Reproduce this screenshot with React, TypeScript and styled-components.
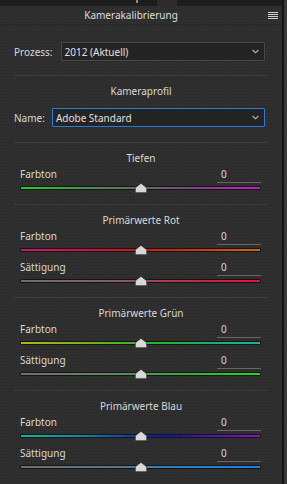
import React from 'react'
import styled, { createGlobalStyle } from 'styled-components'

const GlobalStyle = createGlobalStyle`
  html, body { margin: 0; padding: 0; background: #2f2f2f; }
  body { font-family: "Noto Sans", "Open Sans", sans-serif; }
`

interface ISliderDef {
    label: string,
    value: number,
    gradient: string,
}

interface IGroupDef {
    title: string,
    sliders: ISliderDef[],
}

const GROUPS: IGroupDef[] = [
    {
        title: 'Tiefen',
        sliders: [
            { label: 'Farbton', value: 0, gradient: 'linear-gradient(90deg, #1fd21f 0%, #4f8a4f 30%, #6a6a6a 50%, #7a4a7a 68%, #d014d0 100%)' },
        ],
    },
    {
        title: 'Primärwerte Rot',
        sliders: [
            { label: 'Farbton', value: 0, gradient: 'linear-gradient(90deg, #c8147a 0%, #c81440 30%, #c81818 50%, #c83a10 75%, #c86a10 100%)' },
            { label: 'Sättigung', value: 0, gradient: 'linear-gradient(90deg, #707070 0%, #8a5a62 40%, #c02848 75%, #e8103c 100%)' },
        ],
    },
    {
        title: 'Primärwerte Grün',
        sliders: [
            { label: 'Farbton', value: 0, gradient: 'linear-gradient(90deg, #b4b414 0%, #70b418 30%, #28b428 55%, #14b470 80%, #14b4a8 100%)' },
            { label: 'Sättigung', value: 0, gradient: 'linear-gradient(90deg, #707070 0%, #5e885e 40%, #30b830 75%, #1ed81e 100%)' },
        ],
    },
    {
        title: 'Primärwerte Blau',
        sliders: [
            { label: 'Farbton', value: 0, gradient: 'linear-gradient(90deg, #14b4a0 0%, #1488a0 25%, #1440a8 45%, #1414a8 60%, #5014b4 80%, #8c14c8 100%)' },
            { label: 'Sättigung', value: 0, gradient: 'linear-gradient(90deg, #707070 0%, #5a7890 40%, #2080d0 75%, #1880e8 100%)' },
        ],
    },
]

const Screen = styled.div`
    width: 287px;
    height: 484px;
    overflow: hidden;
    display: flex;
    background: #2f2f2f;
`

const Panel = styled.div`
    width: 282px;
    display: flex;
    flex-direction: column;
    background-color: #2f2f2f;
    background-image: radial-gradient(rgba(0,0,0,0.16) 0.6px, transparent 0.9px);
    background-size: 3px 3px;
    color: #d8d8d8;
    font-size: 10px;
`

const EdgeLine = styled.div`
    width: 2px;
    background: #141414;
`

const EdgeRest = styled.div`
    flex: 1;
    background: #3a3a3a;
`

const TopStrip = styled.div`
    height: 6px;
    background: #1d1d1d;
    display: flex;
    align-items: flex-start;
`

const TopMark = styled.div`
    width: 2px;
    height: 3px;
    margin-left: 136px;
    background: #8a8a8a;
`

const TopTab = styled.div`
    width: 20px;
    height: 6px;
    margin-left: 19px;
    background: #2c2c2c;
`

const Header = styled.div`
    height: 18px;
    display: flex;
    align-items: center;
    border-bottom: 1px solid #282828;
    color: #dedede;
`

const HeaderTitle = styled.div`
    flex: 1;
    text-align: center;
    line-height: 18px;
`

const MenuButton = styled.div`
    width: 20px;
    display: flex;
    justify-content: flex-start;
    padding-left: 6px;
    box-sizing: border-box;
    padding-top: 1px;
`

const Body = styled.div`
    padding: 0 14px;
    display: flex;
    flex-direction: column;
`

const SelectRow = styled.div<{ $top: number, $gap: number }>`
    display: flex;
    align-items: center;
    gap: ${p => p.$gap}px;
    margin-top: ${p => p.$top}px;
    padding-right: 3px;
`

const RowLabel = styled.span`
    white-space: nowrap;
`

const SelectBox = styled.div<{ $focused?: boolean }>`
    flex: 1;
    height: 17px;
    display: flex;
    align-items: center;
    justify-content: space-between;
    padding: 0 5px 0 3px;
    background: #242424;
    border: 1px solid ${p => p.$focused ? '#2b7bd8' : '#484848'};
    border-radius: 1px;
    color: #e0e0e0;
`

const Divider = styled.div<{ $top: number }>`
    height: 1px;
    background: #3d3d3d;
    margin-top: ${p => p.$top}px;
`

const GroupTitle = styled.div`
    text-align: center;
    margin-top: 8px;
    height: 14px;
    line-height: 14px;
`

const SliderBlock = styled.div<{ $top: number }>`
    display: flex;
    flex-direction: column;
    margin-top: ${p => p.$top}px;
    padding: 0 7px 0 6px;
`

const SliderHead = styled.div`
    display: flex;
    align-items: flex-start;
    justify-content: space-between;
    height: 16px;
`

const SliderLabel = styled.span`
    line-height: 14px;
`

const ValueField = styled.span`
    width: 44px;
    box-sizing: border-box;
    padding-left: 4px;
    line-height: 14px;
    padding-bottom: 1px;
    border-bottom: 1px solid #666;
`

const TrackWrap = styled.div`
    position: relative;
    margin-top: 3px;
    height: 4px;
`

const Track = styled.div`
    height: 2px;
    border: 1px solid #151515;
    border-radius: 1px;
`

const Thumb = styled.svg`
    position: absolute;
    top: -3px;
    transform: translateX(-50%);
`

function Chevron() {
    return (
        <svg width="7" height="5" viewBox="0 0 7 5">
            <path d="M0.6 1 L3.5 3.8 L6.4 1" stroke="#b8b8b8" strokeWidth="1.1" fill="none" />
        </svg>
    )
}

function Slider({ def, top }: { def: ISliderDef, top: number }) {
    const pct = 50 + def.value / 2
    return (
        <SliderBlock $top={top}>
            <SliderHead>
                <SliderLabel>{def.label}</SliderLabel>
                <ValueField>{def.value}</ValueField>
            </SliderHead>
            <TrackWrap>
                <Track style={{ background: def.gradient }} />
                <Thumb width="12" height="10" viewBox="0 0 12 10" style={{ left: `${pct}%` }}>
                    <path d="M6 0.3 L11.7 4.8 L11.7 9.7 L0.3 9.7 L0.3 4.8 Z" fill="#d8d8d8" stroke="#1a1a1a" strokeWidth="0.6" />
                </Thumb>
            </TrackWrap>
        </SliderBlock>
    )
}

export default function App() {
    return (
        <Screen>
            <GlobalStyle />
            <Panel>
                <TopStrip><TopMark /><TopTab /></TopStrip>
                <Header>
                    <HeaderTitle>Kamerakalibrierung</HeaderTitle>
                    <MenuButton>
                        <svg width="10" height="7" viewBox="0 0 10 7">
                            <rect x="0" y="0" width="10" height="1" fill="#cfcfcf" />
                            <rect x="0" y="2" width="10" height="1" fill="#cfcfcf" />
                            <rect x="0" y="4" width="10" height="1" fill="#cfcfcf" />
                            <rect x="0" y="6" width="10" height="1" fill="#cfcfcf" />
                        </svg>
                    </MenuButton>
                </Header>
                <Body>
                    <SelectRow $top={17} $gap={8}>
                        <RowLabel>Prozess:</RowLabel>
                        <SelectBox>2012 (Aktuell)<Chevron /></SelectBox>
                    </SelectRow>
                    <Divider $top={14} />
                    <GroupTitle>Kameraprofil</GroupTitle>
                    <SelectRow $top={10} $gap={7}>
                        <RowLabel>Name:</RowLabel>
                        <SelectBox $focused>Adobe Standard<Chevron /></SelectBox>
                    </SelectRow>
                    {GROUPS.map((g, gi) => (
                        <React.Fragment key={g.title}>
                            <Divider $top={gi === 0 ? 15 : 14} />
                            <GroupTitle>{g.title}</GroupTitle>
                            {g.sliders.map((s, si) => (
                                <Slider key={s.label} def={s} top={si === 0 ? 2 : 8} />
                            ))}
                        </React.Fragment>
                    ))}
                </Body>
            </Panel>
            <EdgeLine />
            <EdgeRest />
        </Screen>
    )
}
